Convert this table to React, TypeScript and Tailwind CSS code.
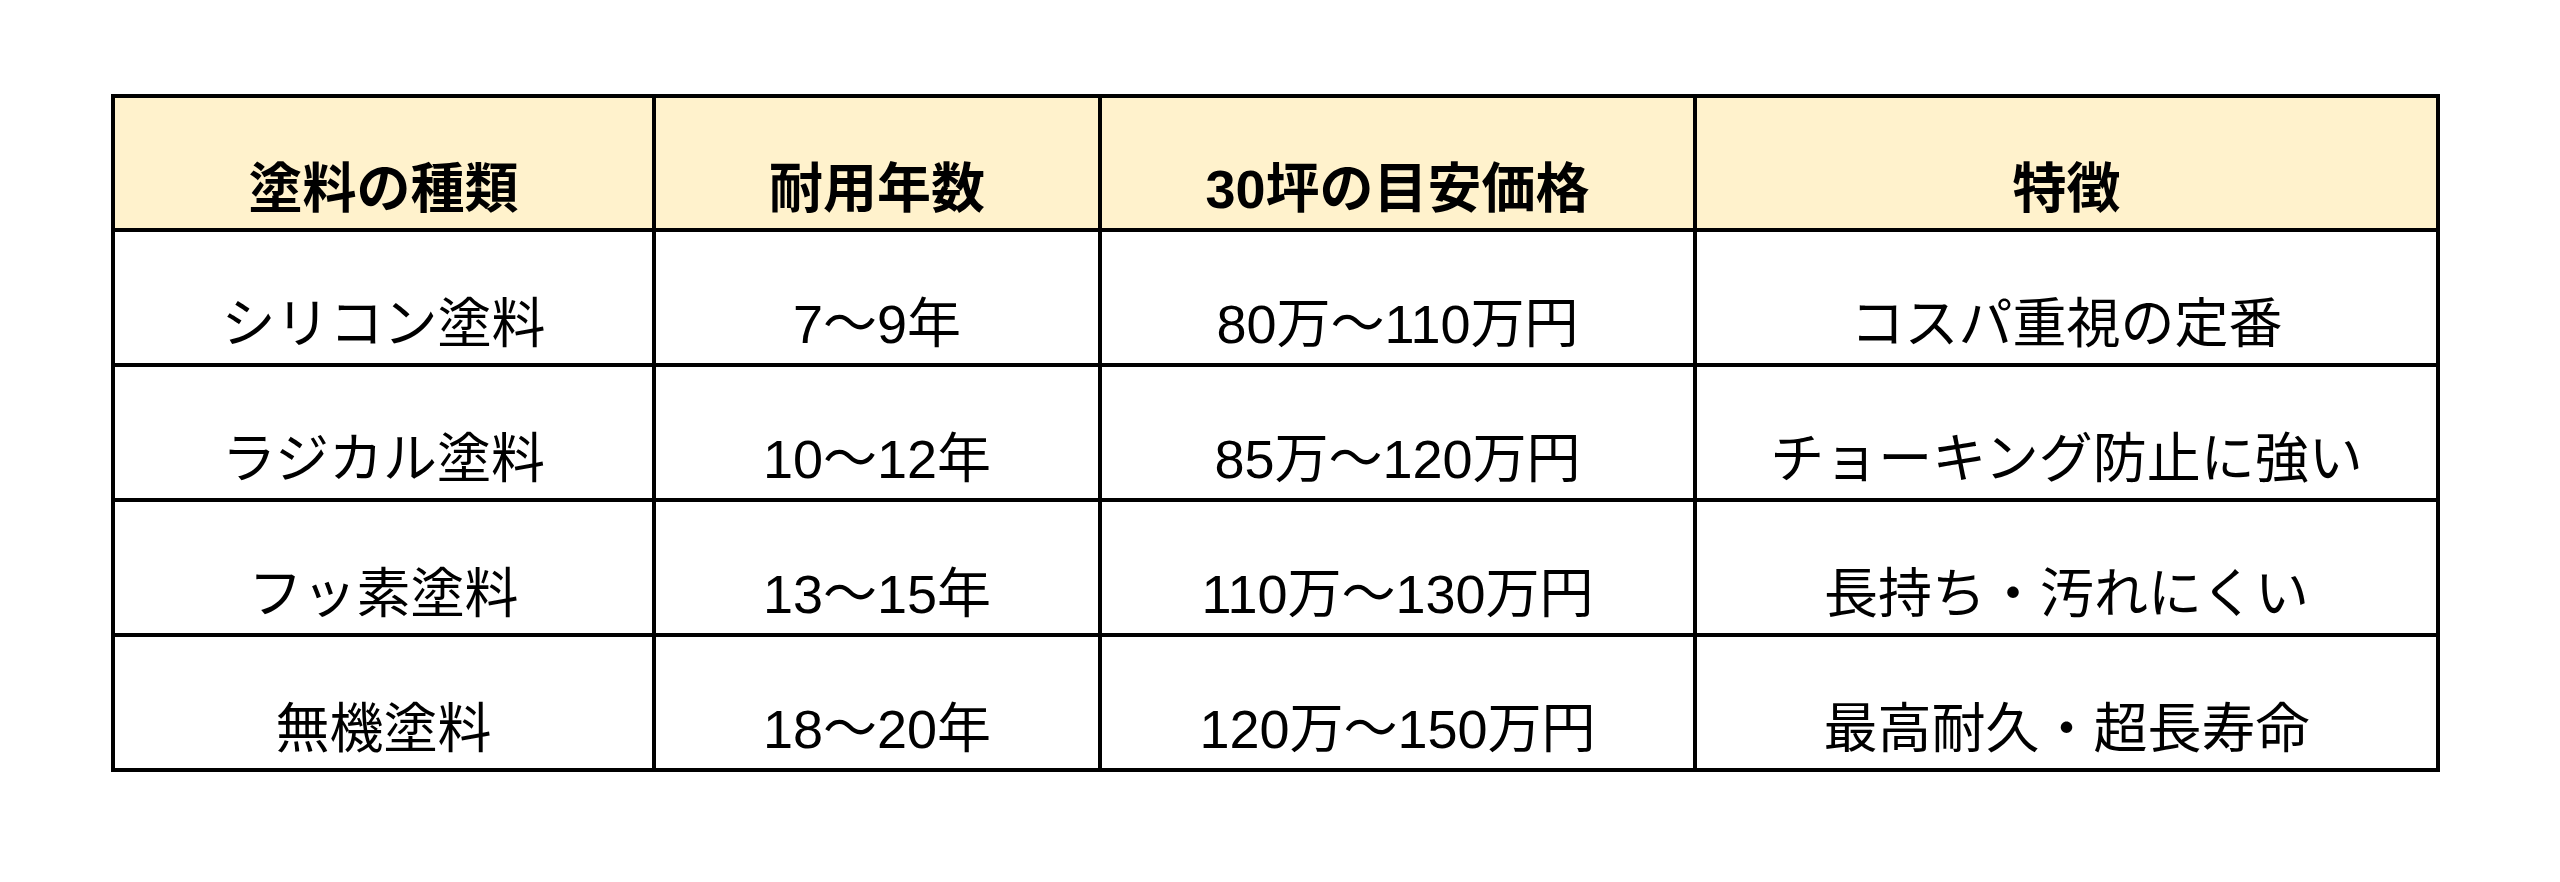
const headers = ["塗料の種類", "耐用年数", "30坪の目安価格", "特徴"];

const rows = [
  ["シリコン塗料", "7～9年", "80万～110万円", "コスパ重視の定番"],
  ["ラジカル塗料", "10～12年", "85万～120万円", "チョーキング防止に強い"],
  ["フッ素塗料", "13～15年", "110万～130万円", "長持ち・汚れにくい"],
  ["無機塗料", "18～20年", "120万～150万円", "最高耐久・超長寿命"],
];

const colWidths = ["w-[541px]", "w-[446px]", "w-[595px]", "w-[743px]"];

export default function App() {
  return (
    <div
      className="w-[2560px] h-[882px] bg-white pl-[111px] pt-[94px] text-black"
      style={{ fontFamily: '"Liberation Sans", "Noto Sans CJK JP", sans-serif' }}
    >
      <div className="inline-flex flex-col border-l-4 border-t-4 border-black">
        <div className="flex bg-[#fff2cc]">
          {headers.map((h, i) => (
            <div
              key={h}
              className={`${colWidths[i]} h-[134px] flex items-end justify-center pb-[12px] border-r-4 border-b-4 border-black text-[54px] leading-[54px] font-bold`}
            >
              {h}
            </div>
          ))}
        </div>
        {rows.map((row) => (
          <div key={row[0]} className="flex">
            {row.map((cell, i) => (
              <div
                key={i}
                className={`${colWidths[i]} h-[135px] flex items-end justify-center pb-[12px] border-r-4 border-b-4 border-black text-[54px] leading-[54px]`}
              >
                {cell}
              </div>
            ))}
          </div>
        ))}
      </div>
    </div>
  );
}
